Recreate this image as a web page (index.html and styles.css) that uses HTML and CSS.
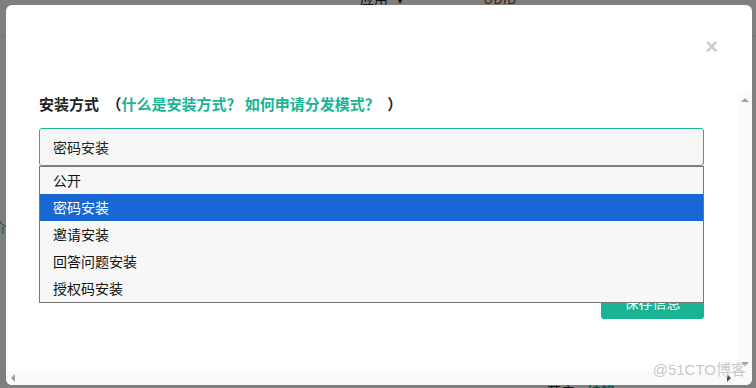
FILE: index.html
```html
<!DOCTYPE html>
<html lang="zh">
<head>
  <meta charset="UTF-8">
  <meta name="viewport" content="width=device-width, initial-scale=1.0">
  <title>安装方式</title>
  <link rel="stylesheet" href="styles.css">
</head>
<body>
  <!-- Page derrière la fenêtre -->
  <div class="page">
    <div class="topnav">
      <span class="nav-item">应用 <span class="caret">▾</span></span>
      <span class="nav-item udid">UDID</span>
    </div>
    <div class="side-text">介</div>
    <div class="bottom-row">
      <span>开启</span>
      <span class="link">编辑</span>
    </div>
  </div>

  <!-- Fond sombre -->
  <div class="overlay"></div>

  <!-- Fenêtre modale -->
  <div class="modal">
    <div class="modal-header">
      <span class="close">×</span>
    </div>

    <div class="scroll-area">
      <div class="scroll-content">
        <div class="label-row">
          <strong>安装方式</strong>
          <span class="paren">（</span><a class="link">什么是安装方式？</a>
          <a class="link">如何申请分发模式？</a><span class="paren"> ）</span>
        </div>

        <div class="select-wrap">
          <div class="select">密码安装</div>
          <ul class="options">
            <li>公开</li>
            <li class="selected">密码安装</li>
            <li>邀请安装</li>
            <li>回答问题安装</li>
            <li>授权码安装</li>
          </ul>
        </div>

        <div class="actions">
          <button class="save-btn">保存信息</button>
        </div>
      </div>

      <div class="vbar">
        <span class="arrow arrow-up"></span>
        <span class="arrow arrow-down"></span>
      </div>
      <div class="hbar">
        <span class="arrow arrow-left"></span>
        <span class="arrow arrow-right"></span>
      </div>
      <div class="corner"></div>
    </div>
  </div>

  <div class="watermark">@51CTO博客</div>
</body>
</html>
```

FILE: styles.css
```css
/* Style global */
body, html {
  margin: 0;
  padding: 0;
  width: 756px;
  height: 388px;
  overflow: hidden;
  font-family: "Noto Sans CJK SC", "Liberation Sans", sans-serif;
  font-size: 14px;
  color: #333;
}

body {
  position: relative;
}

/* Page derrière */
.page {
  height: 388px;
  display: flex;
  flex-direction: column;
  background: #fff;
}

.topnav {
  display: flex;
  align-items: flex-start;
  height: 48px;
  margin-top: -11px;
  padding-left: 360px;
  border-bottom: 1px solid #e7eaec;
  box-sizing: border-box;
}

.nav-item {
  font-size: 14px;
  line-height: 18px;
  color: #222;
}

.caret {
  font-size: 12px;
  margin-left: 6px;
}

.udid {
  margin-left: 80px;
  color: #a33;
}

.side-text {
  margin-top: 180px;
  margin-left: -7px;
  color: #1ab394;
  font-size: 14px;
}

.bottom-row {
  margin-top: auto;
  margin-bottom: -13px;
  padding-left: 547px;
  display: flex;
  gap: 12px;
  color: #222;
}

.bottom-row .link {
  color: #1ab394;
}

/* Fond sombre */
.overlay {
  position: absolute;
  inset: 0;
  background: rgba(0, 0, 0, 0.5);
}

/* Fenêtre */
.modal {
  position: absolute;
  left: 6px;
  top: 5px;
  width: 746px;
  height: 380px;
  background: #fff;
  border-radius: 6px;
  display: flex;
  flex-direction: column;
  overflow: hidden;
}

.modal-header {
  height: 87px;
  display: flex;
  justify-content: flex-end;
  align-items: flex-start;
  padding: 31px 34px 0 0;
  box-sizing: border-box;
}

.close {
  font-family: "Liberation Sans", sans-serif;
  font-size: 22px;
  font-weight: bold;
  line-height: 22px;
  color: #000;
  opacity: 0.2;
}

/* Zone défilante */
.scroll-area {
  flex: 1;
  display: grid;
  grid-template-columns: 1fr 15px;
  grid-template-rows: 1fr 14px;
  min-height: 0;
}

.scroll-content {
  padding: 2px 33px 0 33px;
  overflow: hidden;
}

.label-row {
  font-size: 15px;
  line-height: 20px;
  color: #222;
}

.label-row strong {
  font-weight: bold;
}

.paren {
  font-weight: bold;
  margin-left: 4px;
}

.link {
  color: #1ab394;
  font-weight: bold;
  text-decoration: none;
}

/* Liste déroulante */
.select-wrap {
  position: relative;
  margin-top: 14px;
}

.select {
  height: 38px;
  line-height: 36px;
  border: 1px solid #1ab394;
  border-radius: 3px;
  background: #f6f6f6;
  padding-left: 13px;
  box-sizing: border-box;
  color: #222;
}

.options {
  position: absolute;
  top: 100%;
  left: 0;
  right: 0;
  margin: 0;
  padding: 0;
  list-style: none;
  background: #f7f7f7;
  border: 1px solid #767676;
  z-index: 2;
}

.options li {
  height: 27px;
  line-height: 27px;
  padding-left: 13px;
  color: #111;
}

.options li.selected {
  background: #1967d2;
  color: #fff;
}

/* Bouton */
.actions {
  display: flex;
  justify-content: flex-end;
  margin-top: 119px;
}

.save-btn {
  width: 103px;
  height: 34px;
  border: none;
  border-radius: 3px;
  background: #1ab394;
  color: #fff;
  font-family: inherit;
  font-size: 14px;
}

/* Barres de défilement */
.vbar, .hbar, .corner {
  background: #fafafa;
}

.vbar {
  display: flex;
  flex-direction: column;
  justify-content: space-between;
  align-items: center;
  padding: 6px 0 5px;
  box-sizing: border-box;
}

.hbar {
  display: flex;
  justify-content: space-between;
  align-items: center;
  padding: 0 6px 0 5px;
}

.arrow {
  width: 0;
  height: 0;
  border-style: solid;
  border-color: transparent;
}

.arrow-up {
  border-width: 0 4px 4px;
  border-bottom-color: #a3a3a3;
}

.arrow-down {
  border-width: 4px 4px 0;
  border-top-color: #a3a3a3;
}

.arrow-left {
  border-width: 4px 4px 4px 0;
  border-right-color: #a3a3a3;
}

.arrow-right {
  border-width: 4px 0 4px 4px;
  border-left-color: #505050;
}

/* Filigrane */
.watermark {
  position: absolute;
  right: 10px;
  bottom: 9px;
  font-family: "Liberation Sans", "Noto Sans CJK SC", sans-serif;
  font-size: 15px;
  color: #c9c9c9;
}
```
